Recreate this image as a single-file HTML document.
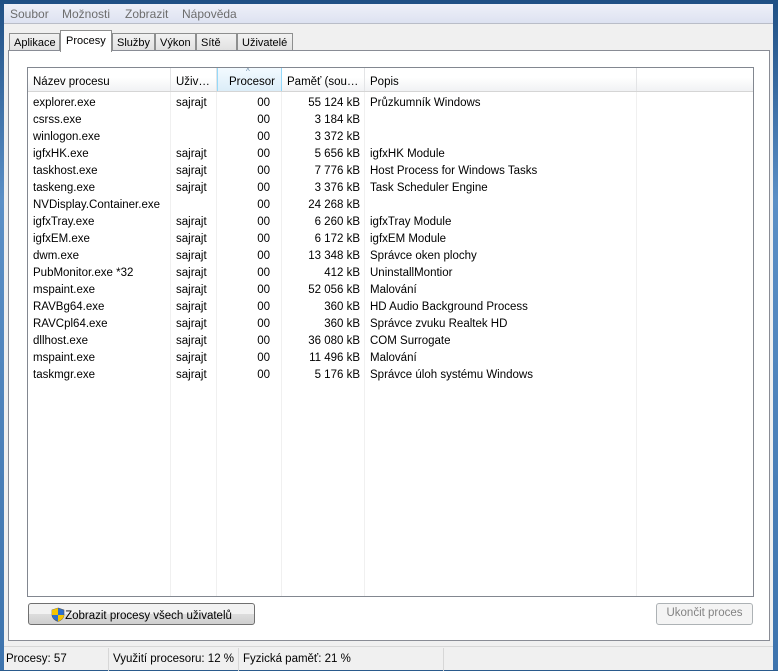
<!DOCTYPE html><html><head><style>
*{margin:0;padding:0;box-sizing:border-box}
body{width:778px;height:670px;background:#2a5a8c;font:11.5px "Liberation Sans",sans-serif;color:#000;position:relative;overflow:hidden}
.win{position:absolute;left:4px;top:4px;width:769px;height:666px;background:#f0f0f0}
.frame{position:absolute;left:0;top:0;width:778px;height:670px;background:linear-gradient(#1f4f84,#5b8fc6 30%,#3d73ad)}
.menu{position:absolute;left:0;top:0;width:769px;height:20px;background:linear-gradient(#eef0f8,#dde2f1);border-bottom:1px solid #b9bdc8;color:#6d6d6d;font-size:12px}
.menu span{position:absolute;top:3px}
.tab{position:absolute;top:29px;height:18px;border:1px solid #8e8f8f;border-bottom:none;background:linear-gradient(#f2f2f2,#e0e0e0);padding:3px 0 0 4px;font-size:11px;white-space:nowrap;overflow:hidden}
.tab.a{top:26px;height:22px;background:#fff;z-index:2;padding-top:4px}
.panel{position:absolute;left:4px;top:46px;width:762px;height:591px;background:#fff;border:1px solid #898c95}
.list{position:absolute;left:23px;top:63px;width:727px;height:530px;border:1px solid #828790;background:#fff;overflow:hidden}
.hdr{position:absolute;left:0;top:0;width:725px;height:24px;background:linear-gradient(#fff 40%,#f1f2f4);border-bottom:1px solid #d5d5d5}
.h{position:absolute;top:0;height:23px;padding-top:8px;border-right:1px solid #e3e4e6;padding-left:5px;white-space:nowrap;overflow:hidden}
.col{position:absolute;top:24px;height:510px;border-right:1px solid #f0f0f0}
.r{position:absolute;left:0;height:17px;width:725px}
.r span{position:absolute;top:2px;white-space:nowrap}
.btn{position:absolute;border:1px solid #707070;border-radius:3px;background:linear-gradient(#f2f2f2 50%,#dddddd 50%,#cfcfcf);font-size:11.5px;text-align:center;padding-top:3px}
.status{position:absolute;left:0;top:642px;width:769px;height:24px;background:#f0f0f0;border-top:1px solid #d7d7d7;font-size:11.5px}
.status span{position:absolute;top:6px;white-space:nowrap}
.sep{position:absolute;top:1px;width:1px;height:23px;background:#d7d7d7}
</style></head><body>
<div class="frame"></div>
<div class="win">
<div class="menu"><span style="left:6px">Soubor</span><span style="left:58px">Možnosti</span><span style="left:121px">Zobrazit</span><span style="left:178px">Nápověda</span></div>
<div class="tab" style="left:5px;width:51px">Aplikace</div>
<div class="tab a" style="left:56px;width:52px;padding-left:5px">Procesy</div>
<div class="tab" style="left:108px;width:43px">Služby</div>
<div class="tab" style="left:151px;width:41px">Výkon</div>
<div class="tab" style="left:192px;width:41px">Sítě</div>
<div class="tab" style="left:233px;width:56px">Uživatelé</div>
<div class="panel"></div>
<div class="list">
<div class="hdr">
<div class="h" style="left:0;width:143px">Název procesu</div>
<div class="h" style="left:143px;width:46px">Uživ…</div>
<div class="h" style="left:189px;width:65px;background:linear-gradient(#f3faff,#dcedf8);border-left:1px solid #96d9f9;border-right:1px solid #96d9f9;text-align:right;padding-right:6px">Procesor<div style="position:absolute;left:28px;top:-1px;font-size:8px;color:#6a8aa8">^</div></div>
<div class="h" style="left:254px;width:83px">Paměť (sou…</div>
<div class="h" style="left:337px;width:272px">Popis</div>
</div>
<div class="col" style="left:0;width:143px"></div>
<div class="col" style="left:143px;width:46px"></div>
<div class="col" style="left:189px;width:65px"></div>
<div class="col" style="left:254px;width:83px"></div>
<div class="col" style="left:337px;width:272px"></div>
<div id="rows"></div>
</div>
<div class="btn" style="left:24px;top:599px;width:227px;height:22px"><svg width="14" height="15" viewBox="0 0 14 15" style="vertical-align:-3px"><path d="M7 1L1 3v5c0 3 3 5.5 6 6.5 3-1 6-3.5 6-6.5V3z" fill="#2d6fcc" stroke="#555" stroke-width=".6"/><path d="M7 1v7H1V3zM7 8h6c0 3-3 5.5-6 6.5z" fill="#f5c400"/></svg>Zobrazit procesy všech uživatelů</div>
<div class="btn" style="left:652px;top:599px;width:97px;height:22px;background:#f4f4f4;border-color:#adb2b5;color:#838383">Ukončit proces</div>
<div class="status"><span style="left:2px">Procesy: 57</span><div class="sep" style="left:104px"></div><span style="left:109px">Využití procesoru: 12 %</span><div class="sep" style="left:234px"></div><span style="left:239px">Fyzická paměť: 21 %</span><div class="sep" style="left:439px"></div></div>
</div>
<script>
var d=[["explorer.exe","sajrajt","55 124 kB","Průzkumník Windows"],["csrss.exe","","3 184 kB",""],["winlogon.exe","","3 372 kB",""],["igfxHK.exe","sajrajt","5 656 kB","igfxHK Module"],["taskhost.exe","sajrajt","7 776 kB","Host Process for Windows Tasks"],["taskeng.exe","sajrajt","3 376 kB","Task Scheduler Engine"],["NVDisplay.Container.exe","","24 268 kB",""],["igfxTray.exe","sajrajt","6 260 kB","igfxTray Module"],["igfxEM.exe","sajrajt","6 172 kB","igfxEM Module"],["dwm.exe","sajrajt","13 348 kB","Správce oken plochy"],["PubMonitor.exe *32","sajrajt","412 kB","UninstallMontior"],["mspaint.exe","sajrajt","52 056 kB","Malování"],["RAVBg64.exe","sajrajt","360 kB","HD Audio Background Process"],["RAVCpl64.exe","sajrajt","360 kB","Správce zvuku Realtek HD"],["dllhost.exe","sajrajt","36 080 kB","COM Surrogate"],["mspaint.exe","sajrajt","11 496 kB","Malování"],["taskmgr.exe","sajrajt","5 176 kB","Správce úloh systému Windows"]];
var h="";d.forEach(function(r,i){h+='<div class="r" style="top:'+(27+i*17)+'px"><span style="left:5px">'+r[0]+'</span><span style="left:148px">'+r[1]+'</span><span style="right:483px">00</span><span style="right:393px">'+r[2]+'</span><span style="left:342px">'+r[3]+'</span></div>'});
document.getElementById("rows").innerHTML=h;
</script>
</body></html>
